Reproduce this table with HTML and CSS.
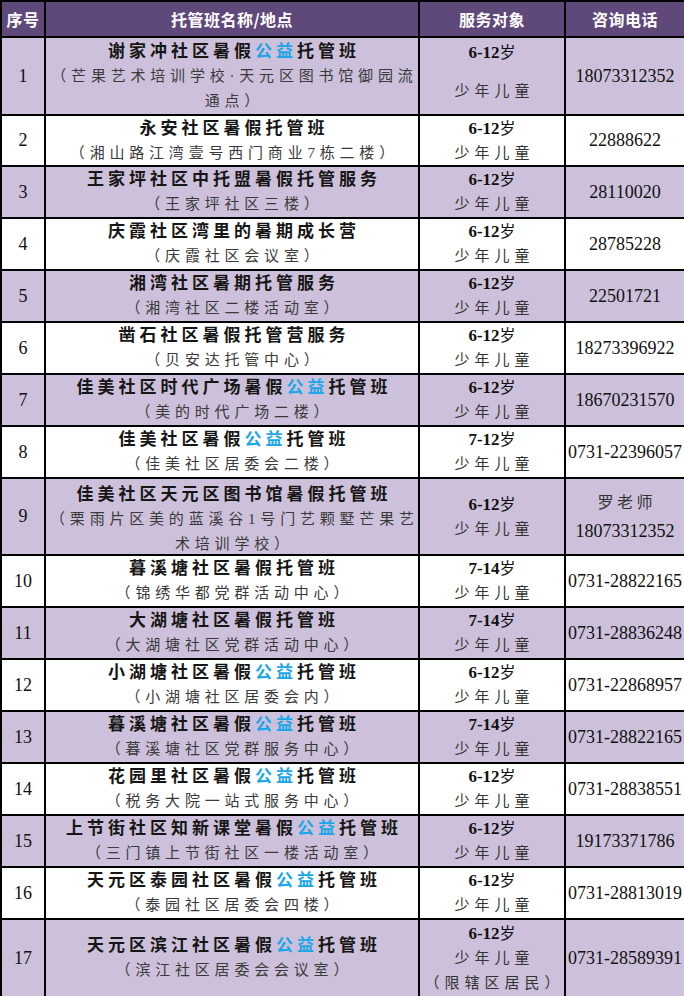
FILE: index.html
```html
<!DOCTYPE html>
<html lang="zh-CN">
<head>
<meta charset="utf-8">
<title>暑假托管班</title>
<link rel="stylesheet" href="styles.css">
</head>
<body>
<div class="sheet">
  <div class="row head">
    <div class="cell">序号</div>
    <div class="cell">托管班名称/地点</div>
    <div class="cell">服务对象</div>
    <div class="cell">咨询电话</div>
  </div>

  <div class="row tall alt">
    <div class="cell num">1</div>
    <div class="cell name"><div class="title">谢家冲社区暑假<span class="hl">公益</span>托管班</div><div class="addr">（芒果艺术培训学校·天元区图书馆御园流<br>通点）</div></div>
    <div class="cell target spread"><div class="age">6-12<span class="cjk">岁</span></div><div class="who">少年儿童</div></div>
    <div class="cell phone">18073312352</div>
  </div>

  <div class="row short">
    <div class="cell num">2</div>
    <div class="cell name"><div class="title">永安社区暑假托管班</div><div class="addr">（湘山路江湾壹号西门商业7栋二楼）</div></div>
    <div class="cell target"><div class="age">6-12<span class="cjk">岁</span></div><div class="who">少年儿童</div></div>
    <div class="cell phone">22888622</div>
  </div>

  <div class="row alt">
    <div class="cell num">3</div>
    <div class="cell name"><div class="title">王家坪社区中托盟暑假托管服务</div><div class="addr">（王家坪社区三楼）</div></div>
    <div class="cell target"><div class="age">6-12<span class="cjk">岁</span></div><div class="who">少年儿童</div></div>
    <div class="cell phone">28110020</div>
  </div>

  <div class="row">
    <div class="cell num">4</div>
    <div class="cell name"><div class="title">庆霞社区湾里的暑期成长营</div><div class="addr">（庆霞社区会议室）</div></div>
    <div class="cell target"><div class="age">6-12<span class="cjk">岁</span></div><div class="who">少年儿童</div></div>
    <div class="cell phone">28785228</div>
  </div>

  <div class="row alt">
    <div class="cell num">5</div>
    <div class="cell name"><div class="title">湘湾社区暑期托管服务</div><div class="addr">（湘湾社区二楼活动室）</div></div>
    <div class="cell target"><div class="age">6-12<span class="cjk">岁</span></div><div class="who">少年儿童</div></div>
    <div class="cell phone">22501721</div>
  </div>

  <div class="row">
    <div class="cell num">6</div>
    <div class="cell name"><div class="title">凿石社区暑假托管营服务</div><div class="addr">（贝安达托管中心）</div></div>
    <div class="cell target"><div class="age">6-12<span class="cjk">岁</span></div><div class="who">少年儿童</div></div>
    <div class="cell phone">18273396922</div>
  </div>

  <div class="row alt">
    <div class="cell num">7</div>
    <div class="cell name"><div class="title">佳美社区时代广场暑假<span class="hl">公益</span>托管班</div><div class="addr">（美的时代广场二楼）</div></div>
    <div class="cell target"><div class="age">6-12<span class="cjk">岁</span></div><div class="who">少年儿童</div></div>
    <div class="cell phone">18670231570</div>
  </div>

  <div class="row">
    <div class="cell num">8</div>
    <div class="cell name"><div class="title">佳美社区暑假<span class="hl">公益</span>托管班</div><div class="addr">（佳美社区居委会二楼）</div></div>
    <div class="cell target"><div class="age">7-12<span class="cjk">岁</span></div><div class="who">少年儿童</div></div>
    <div class="cell phone">0731-22396057</div>
  </div>

  <div class="row tall9 alt">
    <div class="cell num">9</div>
    <div class="cell name lower"><div class="title">佳美社区天元区图书馆暑假托管班</div><div class="addr">（栗雨片区美的蓝溪谷1号门艺颗墅芒果艺<br>术培训学校）</div></div>
    <div class="cell target"><div class="age">6-12<span class="cjk">岁</span></div><div class="who">少年儿童</div></div>
    <div class="cell phone two"><div class="teacher">罗老师</div><div>18073312352</div></div>
  </div>

  <div class="row">
    <div class="cell num">10</div>
    <div class="cell name"><div class="title">暮溪塘社区暑假托管班</div><div class="addr">（锦绣华都党群活动中心）</div></div>
    <div class="cell target"><div class="age">7-14<span class="cjk">岁</span></div><div class="who">少年儿童</div></div>
    <div class="cell phone">0731-28822165</div>
  </div>

  <div class="row alt">
    <div class="cell num">11</div>
    <div class="cell name"><div class="title">大湖塘社区暑假托管班</div><div class="addr">（大湖塘社区党群活动中心）</div></div>
    <div class="cell target"><div class="age">7-14<span class="cjk">岁</span></div><div class="who">少年儿童</div></div>
    <div class="cell phone">0731-28836248</div>
  </div>

  <div class="row">
    <div class="cell num">12</div>
    <div class="cell name"><div class="title">小湖塘社区暑假<span class="hl">公益</span>托管班</div><div class="addr">（小湖塘社区居委会内）</div></div>
    <div class="cell target"><div class="age">6-12<span class="cjk">岁</span></div><div class="who">少年儿童</div></div>
    <div class="cell phone">0731-22868957</div>
  </div>

  <div class="row alt">
    <div class="cell num">13</div>
    <div class="cell name"><div class="title">暮溪塘社区暑假<span class="hl">公益</span>托管班</div><div class="addr">（暮溪塘社区党群服务中心）</div></div>
    <div class="cell target"><div class="age">7-14<span class="cjk">岁</span></div><div class="who">少年儿童</div></div>
    <div class="cell phone">0731-28822165</div>
  </div>

  <div class="row">
    <div class="cell num">14</div>
    <div class="cell name"><div class="title">花园里社区暑假<span class="hl">公益</span>托管班</div><div class="addr">（税务大院一站式服务中心）</div></div>
    <div class="cell target"><div class="age">6-12<span class="cjk">岁</span></div><div class="who">少年儿童</div></div>
    <div class="cell phone">0731-28838551</div>
  </div>

  <div class="row alt">
    <div class="cell num">15</div>
    <div class="cell name"><div class="title">上节街社区知新课堂暑假<span class="hl">公益</span>托管班</div><div class="addr">（三门镇上节街社区一楼活动室）</div></div>
    <div class="cell target"><div class="age">6-12<span class="cjk">岁</span></div><div class="who">少年儿童</div></div>
    <div class="cell phone">19173371786</div>
  </div>

  <div class="row">
    <div class="cell num">16</div>
    <div class="cell name"><div class="title">天元区泰园社区暑假<span class="hl">公益</span>托管班</div><div class="addr">（泰园社区居委会四楼）</div></div>
    <div class="cell target"><div class="age">6-12<span class="cjk">岁</span></div><div class="who">少年儿童</div></div>
    <div class="cell phone">0731-28813019</div>
  </div>

  <div class="row last alt">
    <div class="cell num">17</div>
    <div class="cell name"><div class="title">天元区滨江社区暑假<span class="hl">公益</span>托管班</div><div class="addr">（滨江社区居委会会议室）</div></div>
    <div class="cell target"><div class="age">6-12<span class="cjk">岁</span></div><div class="who">少年儿童</div><div class="who">（限辖区居民）</div></div>
    <div class="cell phone">0731-28589391</div>
  </div>
</div>
</body>
</html>
```

FILE: styles.css
```css
html, body {
  margin: 0;
  padding: 0;
  overflow: hidden;
  background: #ffffff;
}

.sheet {
  width: 682px;
  padding: 2px;
  background: #000000;
  display: flex;
  flex-direction: column;
  gap: 2px;
  font-family: "Liberation Serif", "Noto Sans CJK SC", serif;
  color: #111111;
}

.row {
  display: grid;
  grid-template-columns: 42px 372px 144px 118px;
  gap: 2px;
  height: 50px;
}

.row.head { height: 34px; }
.row.tall { height: 76px; }
.row.short { height: 49px; }
.row.tall9 { height: 75px; }
.row.last { height: 76px; }

.cell {
  background: #ffffff;
  display: flex;
  flex-direction: column;
  justify-content: center;
  align-items: center;
  text-align: center;
  white-space: nowrap;
  overflow: hidden;
}

.row.alt .cell { background: #ccc0da; }

.row.head .cell {
  background: #5f497a;
  color: #ffffff;
  font-family: "Noto Sans CJK SC", "Noto Sans", sans-serif;
  font-weight: 700;
  font-size: 16px;
  letter-spacing: 0.5px;
}

.num {
  font-size: 18px;
}

.title {
  font-family: "Liberation Serif", "Noto Sans CJK SC", serif;
  font-weight: 700;
  font-size: 17px;
  line-height: 25px;
  letter-spacing: 4px;
  padding-left: 4px;
  color: #161616;
}

.hl { color: #1aa6e8; }

.addr {
  font-size: 15px;
  line-height: 25px;
  letter-spacing: 4.8px;
  padding-left: 4.8px;
  color: #3a3a3a;
}

.name.lower { padding-top: 5px; }

.age {
  font-size: 17px;
  font-weight: 700;
  line-height: 25px;
}

.age .cjk {
  font-weight: 400;
  font-size: 16px;
}

.who {
  font-size: 15px;
  line-height: 25px;
  letter-spacing: 5px;
  padding-left: 5px;
  color: #333333;
}

.target.spread {
  justify-content: space-between;
  padding: 2px 0 10px;
}

.phone {
  font-size: 18px;
  color: #111111;
}

.phone.two { line-height: 28px; }

.teacher {
  font-size: 16px;
  letter-spacing: 3.5px;
  padding-left: 3.5px;
  color: #333333;
}
```
